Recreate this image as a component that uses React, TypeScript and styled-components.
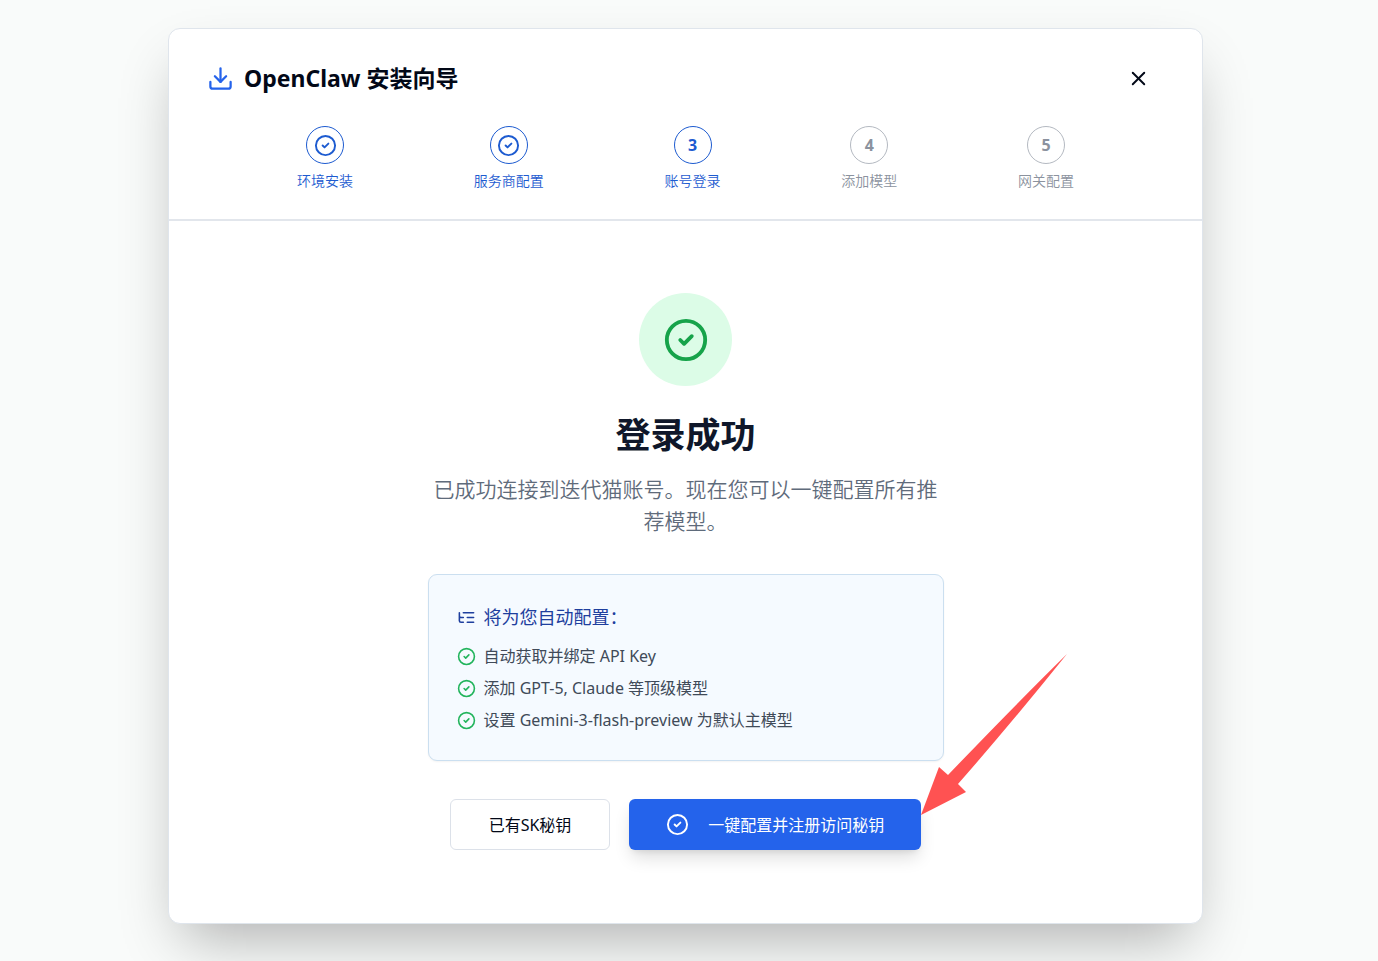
import React from "react";
import styled, { createGlobalStyle, css } from "styled-components";
import { CircleCheck, Download, X } from "lucide-react";

const GlobalStyle = createGlobalStyle`
  * { box-sizing: border-box; }
  body {
    margin: 0;
    background: #f9fbfa;
    color: #020817;
    font-family: "Noto Sans", "Noto Sans CJK SC", sans-serif;
  }
  h1, h2, h3, p, ul, ol { margin: 0; padding: 0; }
  ul, ol { list-style: none; }
  button { font: inherit; cursor: pointer; }
`;

const Page = styled.div`
  display: flex;
  flex-direction: column;
  min-height: 100vh;
  padding: 28px 175px 37px 168px;
`;

const Dialog = styled.main`
  flex: 1;
  display: flex;
  flex-direction: column;
  background: #fff;
  border: 1px solid #dfe5ec;
  border-radius: 12px;
  box-shadow: 0 28px 56px -14px rgba(0, 0, 0, 0.3);
`;

const Header = styled.header`
  padding: 31px 40px 28px 38px;
  border-bottom: 2px solid #e2e6ec;
`;

const TitleRow = styled.div`
  display: flex;
  align-items: center;
  justify-content: space-between;
  height: 36px;
`;

const Title = styled.h1`
  display: flex;
  align-items: center;
  gap: 10px;
  font-size: 23px;
  line-height: 32px;
  font-weight: 700;

  svg { color: #2563eb; }
`;

const CloseButton = styled.button`
  display: grid;
  place-items: center;
  width: 48px;
  height: 36px;
  padding: 0;
  border: 0;
  background: none;
  color: #020817;
`;

const Steps = styled.ol`
  display: flex;
  justify-content: space-between;
  margin-top: 30px;
  padding: 0 88px 0 90px;
`;

const Step = styled.li<{ $reached?: boolean }>`
  display: flex;
  flex-direction: column;
  align-items: center;
  gap: 7px;
  font-size: 14px;
  line-height: 20px;
  font-weight: 350;
  color: ${(p) => (p.$reached ? "#1d5bd0" : "#8b929e")};
`;

const StepBadge = styled.span<{ $reached?: boolean }>`
  display: grid;
  place-items: center;
  width: 38px;
  height: 38px;
  border: 1px solid ${(p) => (p.$reached ? "#1d5bd0" : "#b4b9c1")};
  border-radius: 50%;
  font-size: 16px;
  font-weight: 700;
`;

const Body = styled.section`
  flex: 1;
  display: flex;
  flex-direction: column;
  align-items: center;
  padding: 72px 40px 60px;
`;

const SuccessBadge = styled.div`
  display: grid;
  place-items: center;
  width: 93px;
  height: 93px;
  border-radius: 50%;
  background: #dcfce7;
  color: #16a34a;
`;

const Heading = styled.h2`
  margin-top: 28px;
  font-size: 35px;
  line-height: 42px;
  font-weight: 700;
  color: #0f172a;
`;

const Description = styled.p`
  max-width: 516px;
  margin-top: 17px;
  font-size: 21px;
  line-height: 32px;
  font-weight: 350;
  text-align: center;
  color: #5f6b7b;
`;

const Summary = styled.div`
  width: 100%;
  max-width: 516px;
  margin-top: 37px;
  padding: 28px;
  border: 1px solid #cbdff0;
  border-radius: 9px;
  background: #f5faff;
  box-shadow: 0 1px 2px rgba(0, 0, 0, 0.05);
`;

const SummaryTitle = styled.h3`
  display: flex;
  align-items: center;
  gap: 8px;
  font-size: 18px;
  line-height: 28px;
  font-weight: 400;
  color: #1e3f9e;
`;

const SummaryList = styled.ul`
  display: flex;
  flex-direction: column;
  gap: 8px;
  margin-top: 13px;
`;

const SummaryItem = styled.li`
  display: flex;
  align-items: center;
  gap: 8px;
  font-size: 16px;
  line-height: 24px;
  color: #404a58;

  svg { color: #22b45c; }
`;

const Actions = styled.div`
  display: flex;
  gap: 19px;
  margin-top: 38px;
`;

const Anchor = styled.div`
  position: relative;
`;

const Button = styled.button<{ $primary?: boolean }>`
  display: flex;
  align-items: center;
  height: 51px;
  border-radius: 6px;
  font-size: 16px;
  line-height: 24px;
  white-space: nowrap;
  ${(p) =>
    p.$primary
      ? css`
          gap: 19px;
          padding: 0 37px;
          border: 0;
          background: #2463eb;
          color: #fff;
          box-shadow: 0 10px 18px -3px rgba(0, 0, 0, 0.14), 0 4px 7px -4px rgba(0, 0, 0, 0.12);
        `
      : css`
          padding: 0 38px;
          border: 1px solid #dce1e9;
          background: #fff;
          color: #020817;
        `}
`;

const Pointer = styled.svg`
  position: absolute;
  left: 100%;
  bottom: 35px;
  pointer-events: none;
`;

const ListTreeIcon = () => (
  <svg width="19" height="19" viewBox="0 0 24 24" fill="none" stroke="currentColor" strokeWidth="2" strokeLinecap="round" strokeLinejoin="round" aria-hidden="true">
    <path d="M21 12h-8M21 6H8M21 18h-8M3 6v4c0 1.1.9 2 2 2h3M3 10v6c0 1.1.9 2 2 2h3" />
  </svg>
);

const steps = [
  { label: "环境安装", done: true, reached: true },
  { label: "服务商配置", done: true, reached: true },
  { label: "账号登录", done: false, reached: true },
  { label: "添加模型", done: false, reached: false },
  { label: "网关配置", done: false, reached: false },
];

const summary = [
  "自动获取并绑定 API Key",
  "添加 GPT-5, Claude 等顶级模型",
  "设置 Gemini-3-flash-preview 为默认主模型",
];

export default function App() {
  return (
    <Page lang="zh-CN">
      <GlobalStyle />
      <Dialog>
        <Header>
          <TitleRow>
            <Title>
              <Download size={27} />
              OpenClaw 安装向导
            </Title>
            <CloseButton type="button" aria-label="关闭">
              <X size={23} />
            </CloseButton>
          </TitleRow>
          <Steps>
            {steps.map((s, i) => (
              <Step key={s.label} $reached={s.reached}>
                <StepBadge $reached={s.reached}>{s.done ? <CircleCheck size={23} /> : i + 1}</StepBadge>
                {s.label}
              </Step>
            ))}
          </Steps>
        </Header>
        <Body>
          <SuccessBadge>
            <CircleCheck size={46} />
          </SuccessBadge>
          <Heading>登录成功</Heading>
          <Description>已成功连接到迭代猫账号。现在您可以一键配置所有推荐模型。</Description>
          <Summary>
            <SummaryTitle>
              <ListTreeIcon />
              将为您自动配置：
            </SummaryTitle>
            <SummaryList>
              {summary.map((text) => (
                <SummaryItem key={text}>
                  <CircleCheck size={19} />
                  {text}
                </SummaryItem>
              ))}
            </SummaryList>
          </Summary>
          <Actions>
            <Button type="button">已有SK秘钥</Button>
            <Anchor>
              <Button type="button" $primary>
                <CircleCheck size={23} />
                一键配置并注册访问秘钥
              </Button>
              <Pointer width="147" height="161" viewBox="0 0 147 161" aria-hidden="true">
                <path d="M0 161 18 113 27 121 Q97 48 146 0 Q88 72 37 130 L45 138Z" fill="#ff5252" />
              </Pointer>
            </Anchor>
          </Actions>
        </Body>
      </Dialog>
    </Page>
  );
}
